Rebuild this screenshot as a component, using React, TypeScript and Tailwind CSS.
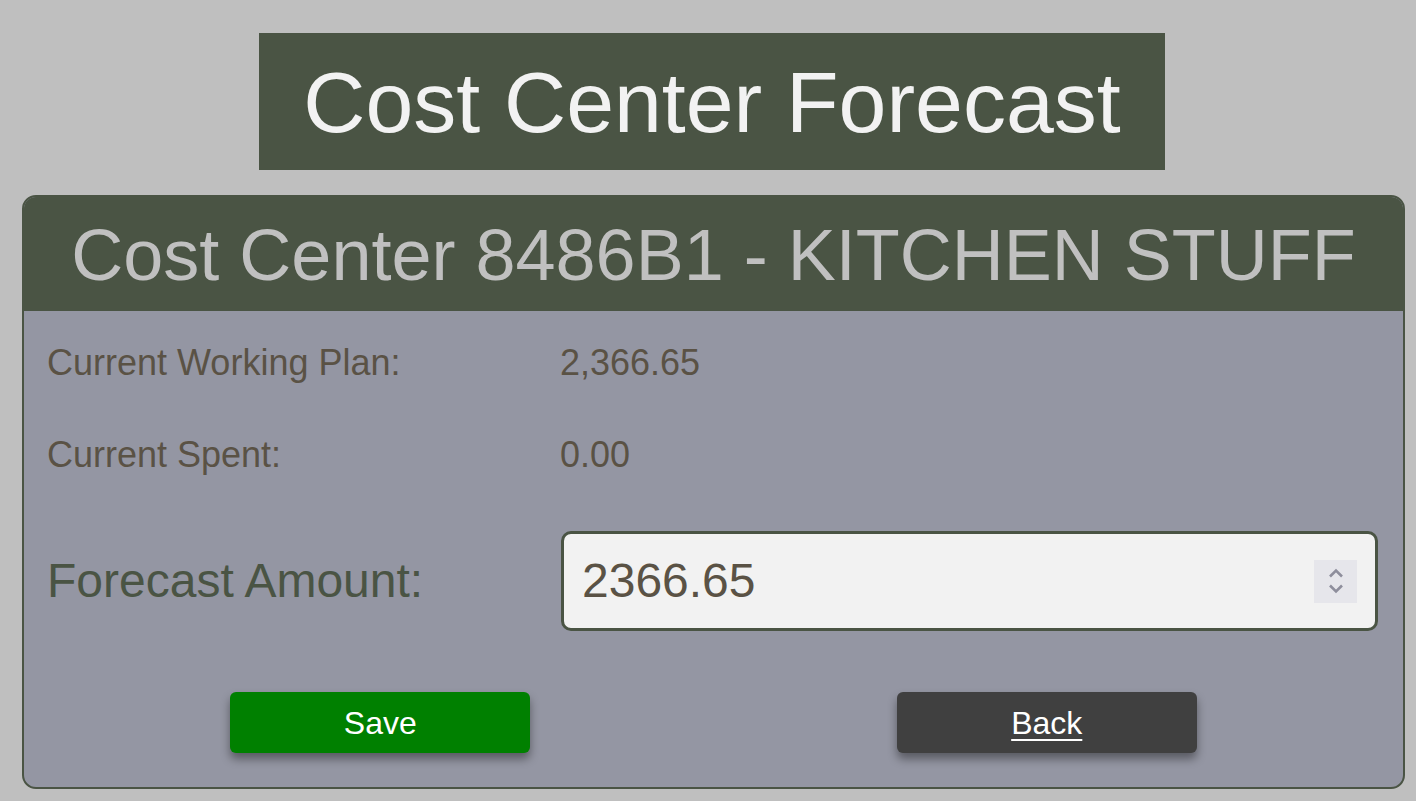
export default function App() {
  return (
    <div
      className="min-h-screen w-full bg-[#bfbfbf] pt-[33px]"
      style={{ fontFamily: '"Liberation Sans", Arial, sans-serif' }}
    >
      <div className="ml-[22px] w-[1383px]">
        {/* Page title */}
        <div className="ml-[237px] flex h-[137px] w-[906px] items-center justify-center bg-[#4a5444]">
          <h1 className="text-[86px] leading-none text-[#f2f2f2]">Cost Center Forecast</h1>
        </div>

        {/* Card */}
        <div className="mt-[25px] overflow-hidden rounded-[14px] border-2 border-[#4a5444] bg-[#9496a3]">
          <div className="flex h-[114px] items-center justify-center bg-[#4a5444]">
            <h2 className="pt-[2px] text-[72px] leading-none text-[#c0c0c0]">
              Cost Center 8486B1 - KITCHEN STUFF
            </h2>
          </div>

          <div className="px-[23px] pb-[34px] pt-[32px]">
            <div className="flex h-[40px] items-center text-[36px] text-[#5a5245]">
              <span className="w-[513px]">Current Working Plan:</span>
              <span>2,366.65</span>
            </div>
            <div className="mt-[52px] flex h-[40px] items-center text-[36px] text-[#5a5245]">
              <span className="w-[513px]">Current Spent:</span>
              <span>0.00</span>
            </div>

            <div className="mt-[56px] flex items-center">
              <label className="w-[514px] text-[48px] text-[#4a5444]">Forecast Amount:</label>
              <div className="flex h-[100px] w-[817px] items-center rounded-[10px] border-[3px] border-[#4a5444] bg-[#f2f2f2] pl-[18px] pr-[18px]">
                <input
                  type="text"
                  defaultValue="2366.65"
                  className="min-w-0 flex-1 bg-transparent text-[48px] text-[#5a5245] outline-none"
                />
                <div className="flex h-[43px] w-[43px] flex-col items-center justify-center gap-[6px] bg-[#e6e6eb]">
                  <svg width="16" height="10" viewBox="0 0 16 10">
                    <path d="M2 8.5 L8 2.5 L14 8.5" fill="none" stroke="#8e8e9c" strokeWidth="2.6" />
                  </svg>
                  <svg width="16" height="10" viewBox="0 0 16 10">
                    <path d="M2 1.5 L8 7.5 L14 1.5" fill="none" stroke="#8e8e9c" strokeWidth="2.6" />
                  </svg>
                </div>
              </div>
            </div>

            <div className="mt-[61px] grid grid-cols-2">
              <div className="flex justify-center">
                <button className="h-[61px] w-[300px] rounded-[6px] bg-[#008000] text-[32px] text-white shadow-[0_6px_10px_rgba(0,0,0,0.4)]">
                  Save
                </button>
              </div>
              <div className="flex justify-center">
                <button className="h-[61px] w-[300px] rounded-[6px] bg-[#404040] text-[32px] text-white underline decoration-2 underline-offset-[5px] shadow-[0_6px_10px_rgba(0,0,0,0.4)]">
                  Back
                </button>
              </div>
            </div>
          </div>
        </div>
      </div>
    </div>
  );
}
